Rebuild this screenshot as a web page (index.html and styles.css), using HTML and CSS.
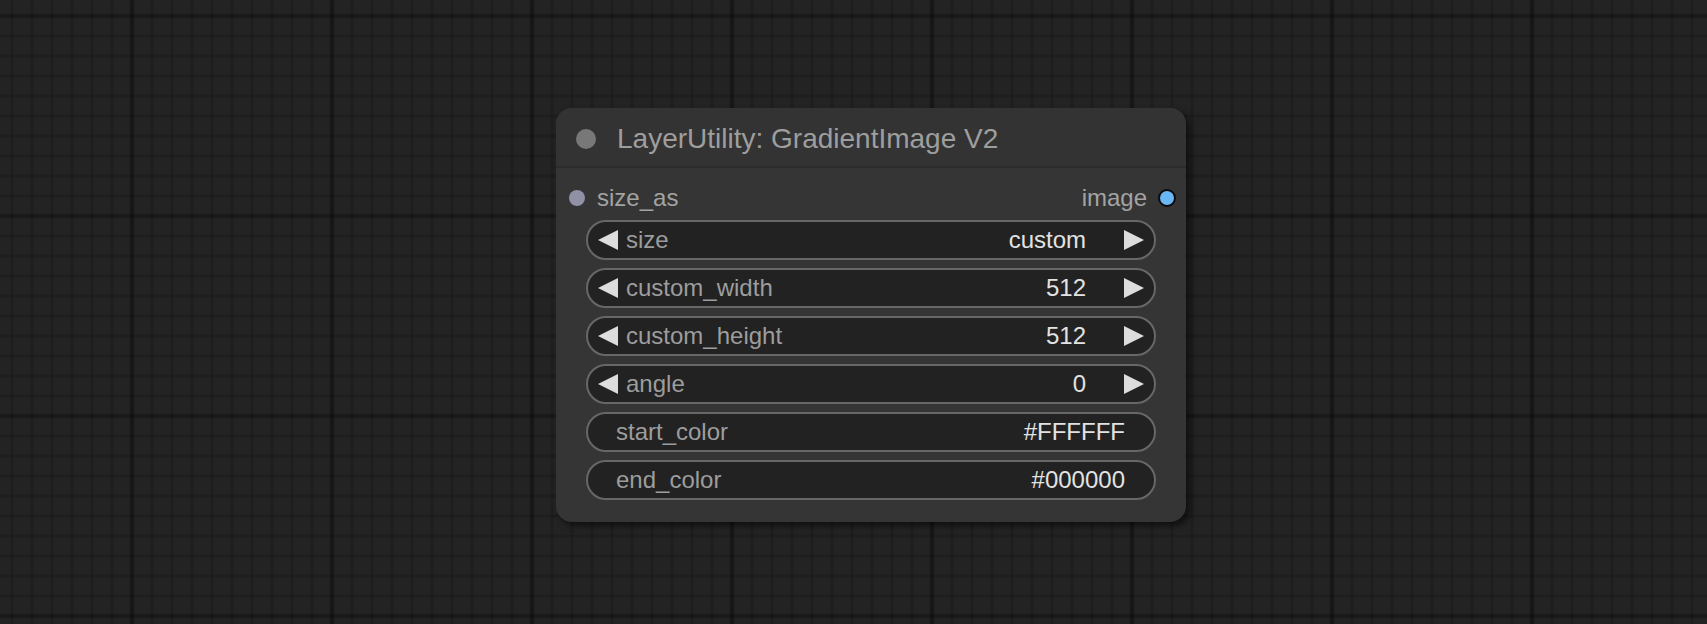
FILE: index.html
```
<!DOCTYPE html>
<html>
<head>
<meta charset="utf-8">
<link rel="stylesheet" href="styles.css">
</head>
<body>
<div class="canvas">
  <div class="node">
    <div class="title">
      <span class="title-dot"></span>
      <span class="title-text">LayerUtility: GradientImage V2</span>
    </div>
    <div class="slots">
      <div class="slot-in">
        <span class="dot dot-in"></span>
        <span class="slot-label">size_as</span>
      </div>
      <div class="slot-out">
        <span class="slot-label">image</span>
        <span class="dot dot-out"></span>
      </div>
    </div>
    <div class="widgets">
      <div class="widget combo">
        <svg class="arrow" viewBox="0 0 20 20"><polygon points="20,0 0,10 20,20"/></svg>
        <span class="w-label">size</span>
        <span class="w-value">custom</span>
        <svg class="arrow arrow-r" viewBox="0 0 20 20"><polygon points="0,0 20,10 0,20"/></svg>
      </div>
      <div class="widget combo">
        <svg class="arrow" viewBox="0 0 20 20"><polygon points="20,0 0,10 20,20"/></svg>
        <span class="w-label">custom_width</span>
        <span class="w-value">512</span>
        <svg class="arrow arrow-r" viewBox="0 0 20 20"><polygon points="0,0 20,10 0,20"/></svg>
      </div>
      <div class="widget combo">
        <svg class="arrow" viewBox="0 0 20 20"><polygon points="20,0 0,10 20,20"/></svg>
        <span class="w-label">custom_height</span>
        <span class="w-value">512</span>
        <svg class="arrow arrow-r" viewBox="0 0 20 20"><polygon points="0,0 20,10 0,20"/></svg>
      </div>
      <div class="widget combo">
        <svg class="arrow" viewBox="0 0 20 20"><polygon points="20,0 0,10 20,20"/></svg>
        <span class="w-label">angle</span>
        <span class="w-value">0</span>
        <svg class="arrow arrow-r" viewBox="0 0 20 20"><polygon points="0,0 20,10 0,20"/></svg>
      </div>
      <div class="widget text">
        <span class="w-label">start_color</span>
        <span class="w-value">#FFFFFF</span>
      </div>
      <div class="widget text">
        <span class="w-label">end_color</span>
        <span class="w-value">#000000</span>
      </div>
    </div>
  </div>
</div>
</body>
</html>
```
FILE: styles.css
```
html, body {
  margin: 0;
  padding: 0;
}
body {
  width: 1707px;
  height: 624px;
  overflow: hidden;
  font-family: "Liberation Sans", Arial, sans-serif;
  background-color: #232323;
  background-image:
    linear-gradient(90deg, transparent 0, transparent 129px, rgba(0,0,0,0.2) 130px, rgba(0,0,0,0.3) 132px, rgba(0,0,0,0.2) 134px, transparent 135px),
    linear-gradient(180deg, transparent 0, transparent 13px, rgba(0,0,0,0.12) 14px, rgba(0,0,0,0.2) 16px, rgba(0,0,0,0.12) 18px, transparent 19px),
    linear-gradient(90deg, transparent 0, transparent 10px, rgba(0,0,0,0.1) 11px, rgba(0,0,0,0.17) 12px, rgba(0,0,0,0.1) 13px, transparent 14px),
    linear-gradient(180deg, transparent 0, transparent 14px, rgba(0,0,0,0.1) 15px, rgba(0,0,0,0.17) 16px, rgba(0,0,0,0.1) 17px, transparent 18px);
  background-size: 200px 100%, 100% 200px, 20px 100%, 100% 20px;
  background-repeat: repeat;
}
.canvas {
  position: relative;
  width: 1707px;
  height: 624px;
}
.node {
  position: absolute;
  left: 556px;
  top: 108px;
  width: 630px;
  height: 414px;
  box-sizing: border-box;
  background: #353535;
  border-radius: 16px;
  box-shadow: 4px 4px 6px rgba(0,0,0,0.55);
  display: flex;
  flex-direction: column;
  padding-bottom: 22px;
}
.title {
  height: 60px;
  box-sizing: border-box;
  display: flex;
  align-items: center;
  background: #333333;
  border-radius: 16px 16px 0 0;
  border-bottom: 2px solid #2c2c2c;
  padding-top: 3px;
}
.title-dot {
  width: 20px;
  height: 20px;
  border-radius: 50%;
  background: #787878;
  margin-left: 20px;
}
.title-text {
  margin-left: 21px;
  font-size: 28px;
  color: #9e9e9e;
  white-space: nowrap;
}
.slots {
  height: 52px;
  box-sizing: border-box;
  padding: 10px 0 2px 0;
  display: flex;
  justify-content: space-between;
}
.slot-in, .slot-out {
  height: 40px;
  display: flex;
  align-items: center;
}
.dot {
  display: block;
  border-radius: 50%;
}
.dot-in {
  width: 16px;
  height: 16px;
  background: #9090a6;
  margin-left: 13px;
  margin-right: 12px;
}
.dot-out {
  width: 14px;
  height: 14px;
  background: #6ab7f6;
  border: 2px solid #0a0a0a;
  margin-left: 11px;
  margin-right: 10px;
}
.slot-label {
  font-size: 24px;
  color: #a3a3a3;
}
.widgets {
  display: flex;
  flex-direction: column;
  gap: 8px;
  margin: 0 30px;
}
.widget {
  height: 40px;
  box-sizing: border-box;
  border: 2px solid #676767;
  border-radius: 20px;
  background: #222222;
  display: flex;
  align-items: center;
  font-size: 24px;
  white-space: nowrap;
}
.w-label {
  color: #9d9d9d;
}
.w-value {
  flex: 1;
  text-align: right;
  color: #e2e2e2;
}
.arrow {
  width: 20px;
  height: 20px;
  fill: #dddddd;
  margin-left: 10px;
  margin-right: 8px;
  flex: none;
}
.arrow-r {
  margin-left: 38px;
  margin-right: 10px;
}
.text {
  padding: 0 29px 0 28px;
}
```
